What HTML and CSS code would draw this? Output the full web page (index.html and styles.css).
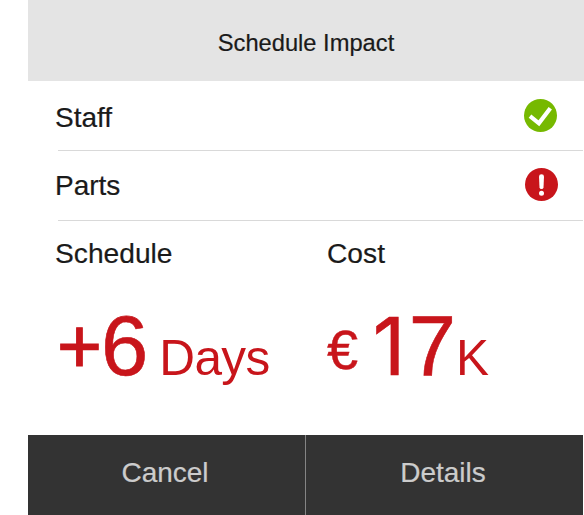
FILE: index.html
```html
<!DOCTYPE html>
<html lang="en">
<head>
<meta charset="utf-8">
<title>Schedule Impact</title>
<link rel="stylesheet" href="styles.css">
</head>
<body>
<main class="dialog">
  <header class="title">Schedule Impact</header>
  <div class="row staff"><span>Staff</span>
    <svg class="icon" viewBox="0 0 33 33"><circle cx="16.5" cy="16.5" r="16.5" fill="#76b900"/><path d="M6 17.2 14.9 24.3 26.3 9.2" fill="none" stroke="#fff" stroke-width="4.2"/></svg>
  </div>
  <div class="row parts"><span>Parts</span>
    <svg class="icon" viewBox="0 0 33 33"><circle cx="16.5" cy="16.5" r="16.5" fill="#c8151b"/><path d="M14 8.5Q14 6.3 16.5 6.3T19 8.5L18.5 19.5Q18.3 21 16.5 21T14.5 19.5Z" fill="#fff"/><circle cx="16.5" cy="25.3" r="2.5" fill="#fff"/></svg>
  </div>
  <section class="metrics">
    <div class="metric schedule"><h2>Schedule</h2><p><span class="sign">+</span><span class="num">6</span><span class="unit">Days</span></p></div>
    <div class="metric cost"><h2>Cost</h2><p><span class="euro">€</span><span class="num"><span class="one">1</span>7</span><span class="unit">K</span></p></div>
  </section>
  <footer class="actions"><button>Cancel</button><button>Details</button></footer>
</main>
</body>
</html>
```
FILE: styles.css
```css
* { box-sizing: border-box; }
body { margin: 0; background: #fff; color: #1a1a1a; font-family: "Liberation Sans", Arial, sans-serif; }
.dialog { margin-left: 28px; width: 556px; height: 515px; display: flex; flex-direction: column; overflow: hidden; }
.title { height: 81px; background: #e4e4e4; text-align: center; font-size: 23.7px; line-height: 27px; padding-top: 30px; -webkit-text-stroke: 0.2px; }
.row { display: flex; justify-content: space-between; height: 70px; margin: 0 1px 0 30px; border-bottom: 1px solid #d9d9d9; font-size: 28px; line-height: 32px; padding-top: 21px; -webkit-text-stroke: 0.2px; }
.row span { margin-left: -3px; }
.icon { width: 33px; height: 33px; margin: -3px 26px 0 0; }
.parts { padding-top: 19px; }
.parts .icon { margin-top: -2px; margin-right: 25px; }
.metrics { display: grid; grid-template-columns: 272px 1fr; height: 214px; padding: 16px 0 0 27px; }
h2 { margin: 0; font-size: 28.2px; font-weight: 400; line-height: 32px; -webkit-text-stroke: 0.2px; }
p { margin: 32px 0 0; color: #c8151b; line-height: 90px; white-space: nowrap; display: flex; align-items: baseline; }
.sign, .num { font-size: 85px; letter-spacing: -7px; -webkit-text-stroke: 0.6px; }
.sign { font-size: 77px; letter-spacing: 0; margin: 0 -1px 0 2px; position: relative; top: -2px; -webkit-text-stroke: 1.2px; }
.one { display: inline-block; width: 36px; margin-left: 3.5px; font-family: Inter, "Liberation Sans", sans-serif; font-size: 80px; line-height: 1; letter-spacing: 0; }
.unit { font-size: 49.5px; letter-spacing: -0.6px; margin-left: 7px; }
.euro { font-size: 56px; margin-right: 11px; position: relative; top: -6px; -webkit-text-stroke: 0.4px; }
.schedule .unit { margin-left: 18px; }
.actions { display: grid; grid-template-columns: 277px 278px; width: 555px; height: 80px; background: #333; }
button { border: 0; padding: 0 3px 4px 0; background: none; color: #ccc; font: 28px/32px "Liberation Sans", Arial, sans-serif; -webkit-text-stroke: 0.2px; }
button + button { border-left: 1px solid #858585; }
```
